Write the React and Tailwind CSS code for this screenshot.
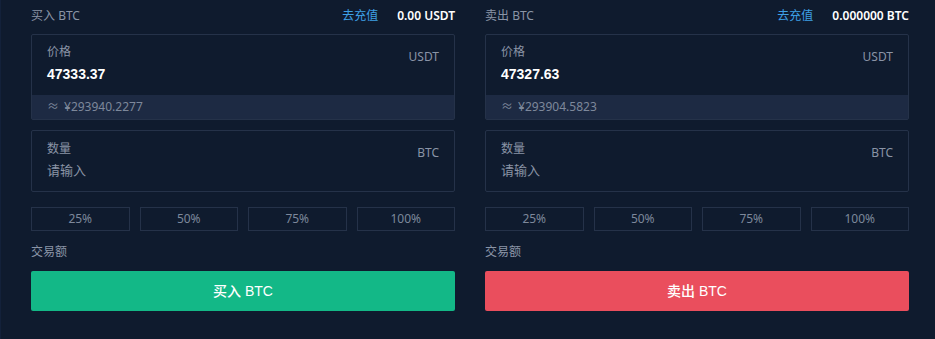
import React from 'react';

const font = { fontFamily: '"Noto Sans", "Noto Sans CJK SC", sans-serif' };

const TradePanel = ({ side, coin, quote, balance, price, cny }) => {
  const isBuy = side === 'buy';
  const title = isBuy ? '买入' : '卖出';
  const percents = ['25%', '50%', '75%', '100%'];

  return (
    <div className="w-[424px] flex flex-col">
      {/* header */}
      <div className="h-[34px] flex items-center justify-between pb-[2px]">
        <span className="text-[12px] text-[#8a94a6]">{title} {coin}</span>
        <div className="flex items-center gap-[19px]">
          <span className="text-[12px] text-[#3ea0e6]">去充值</span>
          <span className="text-[12px] font-semibold text-white">{balance}</span>
        </div>
      </div>

      {/* price box */}
      <div className="border border-[#253249] rounded-[2px]">
        <div className="h-[60px] flex justify-between px-[15px]">
          <div className="flex flex-col pt-[7px]">
            <span className="text-[12px] leading-[20px] text-[#8a94a6]">价格</span>
            <span className="text-[14px] leading-[24px] font-semibold text-white" style={{ fontFamily: '"Liberation Sans", Arial, sans-serif' }}>{price}</span>
          </div>
          <span className="text-[12px] text-[#8a94a6] pt-[13px]">{quote}</span>
        </div>
        <div className="h-[24px] flex items-center gap-[5px] px-[15px] bg-[#1d2a43] text-[12px] text-[#7d889b]">
          <span>≈</span>
          <span>¥{cny}</span>
        </div>
      </div>

      {/* amount box */}
      <div className="mt-[10px] h-[62px] border border-[#253249] rounded-[2px] flex justify-between px-[15px]">
        <div className="flex flex-col pt-[8px]">
          <span className="text-[12px] leading-[20px] text-[#8a94a6]">数量</span>
          <span className="text-[13px] leading-[22px] text-[#8a94a6]">请输入</span>
        </div>
        <span className="text-[12px] text-[#8a94a6] pt-[13px]">{coin}</span>
      </div>

      {/* percents */}
      <div className="mt-[15px] grid grid-cols-4 gap-[10px]">
        {percents.map((p) => (
          <div key={p} className="h-[24px] border border-[#253249] flex items-center justify-center text-[12px] text-[#7d889b]">
            {p}
          </div>
        ))}
      </div>

      <div className="mt-[10px] h-[21px] flex items-center text-[12px] text-[#8a94a6]">交易额</div>

      <button
        className={`mt-[9px] h-[40px] w-full rounded-[2px] text-[14px] font-medium text-white ${isBuy ? 'bg-[#13b887]' : 'bg-[#ea4e5d]'}`}
        style={{ fontFamily: '"Liberation Sans", "Noto Sans CJK SC", sans-serif' }}
      >
        {title} {coin}
      </button>
    </div>
  );
};

export default function App() {
  return (
    <div className="w-[935px] h-[339px] bg-[#0f1b2e] border-l border-[#13213a] flex gap-[30px] pl-[30px]" style={font}>
      <TradePanel side="buy" coin="BTC" quote="USDT" balance="0.00 USDT" price="47333.37" cny="293940.2277" />
      <TradePanel side="sell" coin="BTC" quote="USDT" balance="0.000000 BTC" price="47327.63" cny="293904.5823" />
    </div>
  );
}
